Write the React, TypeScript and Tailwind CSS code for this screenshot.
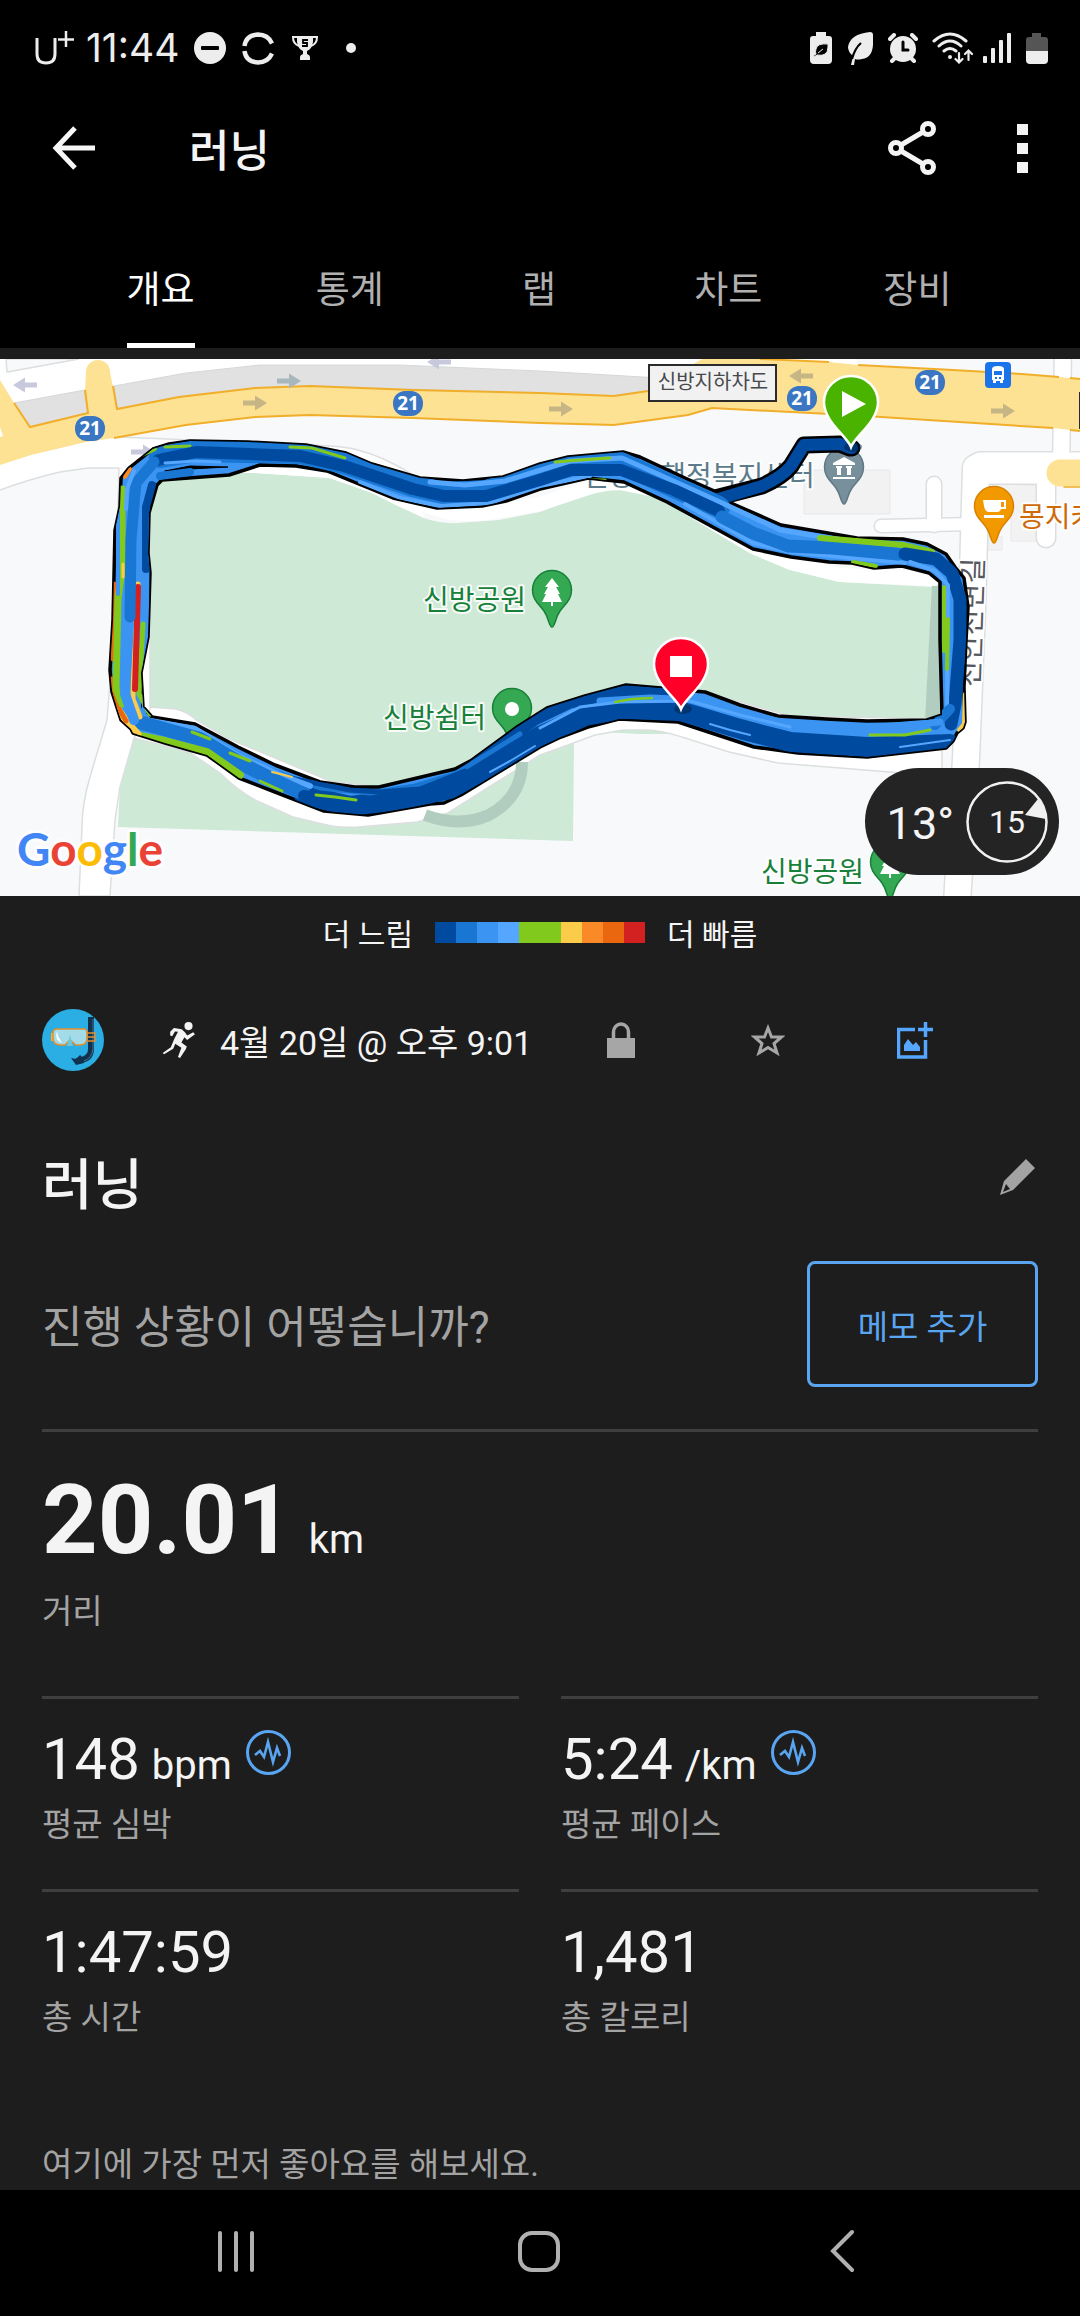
import type { ReactNode } from "react";

const ROUTE_OUTER =
  "M121 119L129 109L153 90L169 85L190 82L248 83L306 86L346 94L372 105L420 119L463 122L503 118L540 105L568 98L623 93L640 98L685 119L719 134L731 144L781 166L857 179L903 180L927 185L946 195L955 208L964 219L968 248L966 281L964 328L965 363L963 369L957 374L953 382L946 389L867 398L798 394L754 388L678 363L619 360L588 368L561 378L540 388L461 436L444 444L430 445L368 456L324 452L275 433L239 419L207 396L165 384L133 374L131 370L121 361L112 333L110 311L113 261L115 171L120 148Z";
const ROUTE_INNER =
  "M162 121L229 116L260 106L296 107L327 112L393 139L437 149L482 147L506 142L540 130L588 119L624 123L667 143L753 190L791 198L829 203L852 204L874 209L902 207L929 214L940 223L940 281L942 356L927 361L867 362L826 360L778 357L740 346L705 333L661 329L626 326L585 337L547 349L517 368L472 401L455 410L379 428L355 428L320 423L275 406L238 388L195 365L152 358L143 348L141 314L148 278L150 214L148 194L149 154L157 126Z";
const ROUTE = ROUTE_OUTER + ROUTE_INNER;

const PACE_COLORS = [
  "#004b9f", "#1976d2", "#3c94f2", "#54a6ff", "#81ca1d",
  "#81ca1d", "#fbcb4a", "#fa8a28", "#ea670f", "#d32020",
];

function Halo({ x, y, size = 28, fill, children }: { x: number; y: number; size?: number; fill: string; children: ReactNode }) {
  return (
    <text x={x} y={y} fontSize={size} fill={fill} stroke="#ffffff" strokeOpacity="0.85" strokeWidth="4" strokeLinejoin="round" paintOrder="stroke">
      {children}
    </text>
  );
}

function Shield({ x, y }: { x: number; y: number }) {
  return (
    <g>
      <rect x={x - 15} y={y - 12} width="30" height="25" rx="12" fill="#3b76c3" />
      <text x={x} y={y + 7} textAnchor="middle" fontSize="19" fontWeight="700" fill="#fff" fontFamily="Noto Sans, sans-serif">21</text>
    </g>
  );
}

function Arrow({ x, y, flip, fill = "#c6b686" }: { x: number; y: number; flip?: boolean; fill?: string }) {
  return (
    <path
      d="M-12 -2.500H0V-7.500L12 0L0 7.500V2.500H-12Z"
      fill={fill}
      transform={`translate(${x} ${y}) rotate(${flip ? 180 : 0})`}
    />
  );
}

function PoiPin({ x, y, fill, edge, children }: { x: number; y: number; fill: string; edge: string; children?: ReactNode }) {
  return (
    <g transform={`translate(${x} ${y})`}>
      <path d="M0 36C-3 36 -3 27 -8 20C-13 13 -19.500 9 -19.500 -1A19.500 19.500 0 0 1 19.500 -1C19.500 9 13 13 8 20C3 27 3 36 0 36Z" fill={fill} stroke={edge} strokeWidth="1.500" />
      {children}
    </g>
  );
}

function Tree() {
  return <path d="M0 -13L7 -4H4L8 3H6L10 11H1V15H-1V11H-10L-6 3H-8L-4 -4H-7Z" fill="#fff" />;
}

function TrackPin({ x, y, fill, children }: { x: number; y: number; fill: string; children: ReactNode }) {
  return (
    <g transform={`translate(${x} ${y})`}>
      <ellipse cx="2" cy="45" rx="9" ry="5" fill="#001a3c" opacity="0.45" />
      <path d="M0 45C-4 34 -27 20 -27 0A27 26 0 0 1 27 0C27 20 4 34 0 45Z" fill={fill} stroke="#fff" strokeWidth="2.500" />
      {children}
    </g>
  );
}

function RouteMap() {
  return (
    <svg viewBox="0 0 1080 537" className="block h-auto w-full" role="img" aria-label="러닝 경로 지도" fontFamily="Noto Sans CJK KR, sans-serif">
      <defs>
        <clipPath id="route-clip">
          <path d={ROUTE} clipRule="evenodd" />
        </clipPath>
      </defs>
      <rect width="1080" height="537" fill="#f8f9fb" />

      {/* parks */}
      <path d="M140 114H255L330 119L372 134L396 146L424 159Q440 165 458 164L499 161L540 153L585 136Q603 131 619 131Q636 130 650 134L712 169L753 194L791 211L840 223L932 228L925 375H640L540 370L400 440H330L230 400L140 365Z" fill="#cee9d6" />
      <path d="M134 379L189 393L220 414Q236 430 255 441L293 458L327 466Q345 469 358 468L417 463L448 454L489 428L540 396L574 384L573 482L540 481L118 468L120 428Z" fill="#cee9d6" />
      <path d="M932 224H942V362H925Z" fill="#b0cdbf" />

      {/* white streets */}
      <path d="M148 348L176 350Q190 354 196 361L227 379L330 422L380 428L455 410L547 349L626 326L705 333L790 357L942 360V414H902L778 404L729 393L685 379Q660 371 647 371H623L595 376L568 386L540 396L489 428L448 454L417 463L358 468Q340 469 327 466L293 458L255 441Q236 430 220 414L189 393L134 379Z" fill="#fff" stroke="#dcdfe0" strokeWidth="1.500" />
      <path d="M119 109L115 261L107 361L90 418Q82 445 82 468L79 537H110L115 461L120 428L134 379L150 350V109Z" fill="#fff" stroke="#dcdfe0" strokeWidth="1.500" />
      <path d="M0 0H829V6H702L640 60L310 50L114 79L119 78L310 86Q345 87 358 91Q376 94 413 116L424 159L396 146L372 134L330 119L255 114H140L119 109H88L60 113Q30 120 0 131Z" fill="#fff" />
      <path d="M0 131Q30 120 60 113L88 109H119M119 78L310 86Q345 87 358 91Q385 98 413 116" fill="none" stroke="#dcdfe0" strokeWidth="1.500" />
      <path d="M330 112L372 125L430 148Q460 160 500 152L540 145L585 130Q603 124 619 124L660 132L753 188L791 204L840 216L938 220" fill="none" stroke="#fff" strokeWidth="14" />
      <path d="M6 0L7 13L79 0Z" fill="#f8f9fb" stroke="#dcdfe0" strokeWidth="1.500" />
      <path d="M425 456Q460 469 489 456Q522 438 522 403" fill="none" stroke="#b0cdbf" strokeWidth="12" />

      {/* buildings */}
      <path d="M804 111H890V155H804ZM993 124L1041 127V147L1036 182H1011V147H993ZM986 178H1002V191H986Z" fill="#f2f2f2" stroke="#e8e8e8" />

      {/* streets on the right */}
      <g fill="none" strokeLinecap="round" strokeLinejoin="round">
        <g stroke="#dcdfe0">
          <path d="M976 109L972 250L966 400L956 560" strokeWidth="29" />
          <path d="M981 109H1100" strokeWidth="34" />
          <path d="M934 125V166" strokeWidth="17" />
          <path d="M881 167L975 165" strokeWidth="15" />
          <path d="M1046 120V179" strokeWidth="21" />
          <path d="M1063 -10L1061 110" strokeWidth="19" />
        </g>
        <g stroke="#fff">
          <path d="M976 109L972 250L966 400L956 560" strokeWidth="26" />
          <path d="M981 109H1100" strokeWidth="31" />
          <path d="M934 125V166" strokeWidth="14" />
          <path d="M881 167L975 165" strokeWidth="12" />
          <path d="M1046 120V179" strokeWidth="18" />
          <path d="M1063 -10L1061 110" strokeWidth="16" />
          <path d="M843 -20V6" strokeWidth="28" />
        </g>
        <path d="M1060 114H1100" stroke="#fde293" strokeWidth="27" />
        <path d="M1064 128H1080" stroke="#f0ae2a" strokeWidth="1.500" />
      </g>

      {/* main road */}
      <path d="M14 44L85 31L88 54L30 68ZM114 27L186 14L260 6H399L540 12L660 19V40L540 34L310 27L255 29L117 50Z" fill="#e1e1e1" stroke="#d4d8da" />
      <path d="M0 21L14 44L30 68L88 54L85 31L86 13A12 12 0 0 1 110 13L113 28L117 50L179 38L255 29L310 27L413 31L540 34L614 37L648 32L702 0H760L829 3L858 6L953 11L1022 15L1059 18L1080 20V72L1053 69L850 56L712 49L688 56L614 66L540 64L413 59L310 56L255 58L186 66L114 79L86 83L31 96L0 106V78L3 77L0 68Z" fill="#fde293" />
      <path d="M14 44L30 68L88 54L85 31M113 27L117 50L179 38L255 29L310 27L413 31L540 34L614 37L648 32M760 0L829 3M858 6L953 11L1022 15L1059 18M1070 19L1080 20M114 79L186 66L255 58L310 56L413 59L540 64L614 66L688 56L712 49L850 56L1053 69M1070 71L1080 72" fill="none" stroke="#f0ae2a" strokeWidth="2" />
      <Arrow x={25} y={26} flip fill="#c8c9dc" />
      <Arrow x={289} y={22} fill="#a9b7bd" />
      <Arrow x={439} y={3} flip fill="#c8c9dc" />
      <Arrow x={255} y={44} />
      <Arrow x={561} y={50} />
      <Arrow x={801} y={17} flip />
      <Arrow x={1003} y={52} />
      <Arrow x={143} y={93} fill="#c8c9dc" />
      <Shield x={90} y={69} />
      <Shield x={408} y={44} />
      <Shield x={802} y={39} />
      <Shield x={930} y={23} />
      <rect x="649" y="6" width="127" height="36" fill="#f1f1f1" stroke="#2b2b2b" strokeWidth="2" />
      <text x="713" y="30" textAnchor="middle" fontSize="20" fill="#47484b">신방지하차도</text>
      <rect x="1079" y="33" width="2" height="37" fill="#2b2b2b" />
      <rect x="985" y="3" width="26" height="26" rx="4" fill="#1a73e8" />
      <path d="M992 10Q992 7 998 7T1004 10V21H1003V24H1000V22H996V24H993V21H992Z" fill="#fff" />
      <path d="M994 12H1002V16H994ZM995 18H997V20H995ZM999 18H1001V20H999Z" fill="#1a73e8" />

      {/* place labels */}
      <Halo x={583} y={127} fill="#5d7b8b">신방동행정복지센터</Halo>
      <Halo x={423} y={251} fill="#188038">신방공원</Halo>
      <Halo x={383} y={369} fill="#188038">신방쉼터</Halo>
      <Halo x={761} y={523} fill="#188038">신방공원</Halo>
      <Halo x={1019} y={168} fill="#cf6a0a">몽지카페</Halo>
      <g transform="translate(979 328) rotate(-88)">
        <Halo x={0} y={0} fill="#55585d">천안천변길</Halo>
      </g>
      <PoiPin x={844} y={109} fill="#78909c" edge="#5f7884">
        <path d="M0 -11L11 -5V-3H-11V-5ZM-8 -2H-2V0H-3V7H-7V0H-8ZM2 -2H8V0H7V7H3V0H2ZM-11 9H11V11H-11Z" fill="#fff" />
      </PoiPin>
      <PoiPin x={552} y={232} fill="#34a853" edge="#188038"><Tree /></PoiPin>
      <PoiPin x={512} y={350} fill="#34a853" edge="#188038"><circle r="7" fill="#fff" /></PoiPin>
      <PoiPin x={890} y={504} fill="#34a853" edge="#188038"><Tree /></PoiPin>
      <PoiPin x={994} y={148} fill="#f29900" edge="#d98200">
        <path d="M-11 -7H7V1Q7 5 3 5H-5Q-9 5 -10 -1ZM-10 8H10V11H-10Z" fill="#fff" />
        <path d="M7 -6H11V1H6" fill="none" stroke="#fff" strokeWidth="2" />
      </PoiPin>

      {/* approach track and loop */}
      <g fill="none" strokeLinecap="round" strokeLinejoin="round">
        <path d="M715 139L762 127Q782 118 791 107L804 86L840 85L850 89H852" stroke="#000" strokeWidth="17" />
        <path d={ROUTE} fill="#3c94f2" fillRule="evenodd" stroke="#000" strokeWidth="3.500" />
        <path d="M715 141L762 127Q782 118 791 107L804 86L840 85L850 89H852" stroke="#004b9f" strokeWidth="12" />
        <g clipPath="url(#route-clip)">
          <path d="M160 98L196 92L300 94L344 104L413 127L444 134L486 132L540 115L571 106L621 104L674 128L719 148" stroke="#1976d2" strokeWidth="22" />
          <path d="M360 123L400 139L440 147L490 144L540 127L590 117" stroke="#54a6ff" strokeWidth="4" />
          <path d="M430 123L465 126L505 122L570 102L622 99L660 116L720 143L780 171L860 184" stroke="#54a6ff" strokeWidth="5" />
          <path d="M165 88L190 87M290 88L312 89L345 99M555 103L580 101L610 99M555 129L590 121L605 121" stroke="#81ca1d" strokeWidth="3" />
          <path d="M158 101L196 93L300 97L344 107L413 130L444 137L486 137L540 121L571 111L621 111L674 131L719 152" stroke="#004b9f" strokeWidth="12" />
          <path d="M165 104L196 102L220 103" stroke="#54a6ff" strokeWidth="3" />
          <path d="M165 112L190 107L228 108L190 110Z" fill="#000" stroke="#000" strokeWidth="1" />
          <path d="M160 117L190 113" stroke="#1976d2" strokeWidth="8" />
          <path d="M685 145L753 184L791 193L850 199L905 204" stroke="#54a6ff" strokeWidth="4" />
          <path d="M722 158L753 174L788 187L833 189L898 195" stroke="#1976d2" strokeWidth="13" />
          <path d="M820 179L857 182L903 186L932 193" stroke="#81ca1d" strokeWidth="6" />
          <path d="M853 203L876 207" stroke="#81ca1d" strokeWidth="4" />
          <path d="M905 195L936 200L952 214L960 240L960 281L955 345L951 365" stroke="#004b9f" strokeWidth="13" />
          <path d="M910 203L935 212L948 226L947 350" stroke="#54a6ff" strokeWidth="4" />
          <path d="M944 228V292M948 260L947 310" stroke="#81ca1d" strokeWidth="4" />
          <path d="M965 335L964 365L959 371" stroke="#fbcb4a" strokeWidth="4" />
          <path d="M935 366L950 350" stroke="#1976d2" strokeWidth="10" />
          <path d="M950 385L867 388L790 383L740 370L680 352L626 350L585 357L540 377L490 408L450 430L400 441L350 447L304 436" stroke="#004b9f" strokeWidth="20" />
          <path d="M475 405L535 361L570 344L626 332L670 335" stroke="#004b9f" strokeWidth="11" />
          <path d="M600 342L650 339L700 341L740 354L790 365L870 369L940 363" stroke="#3c94f2" strokeWidth="7" />
          <path d="M540 369L580 348L620 343L690 342L740 356L790 368" stroke="#54a6ff" strokeWidth="3" />
          <path d="M615 343L632 340L652 339" stroke="#81ca1d" strokeWidth="2.500" />
          <path d="M870 376H905L930 371" stroke="#81ca1d" strokeWidth="3" />
          <path d="M710 365L730 371L750 376M900 388L950 381M535 387L510 402L490 413" stroke="#54a6ff" strokeWidth="2" />
          <path d="M265 409L320 429L370 434L415 427L455 415L520 375" stroke="#1976d2" strokeWidth="5" />
          <path d="M290 419L350 431L380 433L420 430L465 412" stroke="#004b9f" strokeWidth="5" />
          <path d="M140 360L195 370L240 398L280 416L310 427" stroke="#54a6ff" strokeWidth="6" />
          <path d="M135 362L200 380L240 404L280 424L304 435" stroke="#1976d2" strokeWidth="14" />
          <path d="M304 437L350 446L400 441" stroke="#004b9f" strokeWidth="12" />
          <path d="M316 436L335 438L356 441M260 422L282 432M192 373L210 380M230 394L250 402" stroke="#81ca1d" strokeWidth="3" />
          <path d="M272 413L292 418" stroke="#fbcb4a" strokeWidth="2" />
          <path d="M140 377L165 382L207 393L240 416" stroke="#81ca1d" strokeWidth="8" />
          <path d="M118 350L127 363L138 375" stroke="#fbcb4a" strokeWidth="7" />
          <path d="M112 320L118 348L126 362M114 225L113 300" stroke="#ea670f" strokeWidth="5" />
          <path d="M122 130L122 210L118 240L116 330L122 345" stroke="#81ca1d" strokeWidth="7" />
          <path d="M118 150V235" stroke="#3c94f2" strokeWidth="4" />
          <path d="M123 205V218" stroke="#fbcb4a" strokeWidth="3" />
          <path d="M145 130L146 350" stroke="#3c94f2" strokeWidth="8" />
          <path d="M152 126L146 148L146 210" stroke="#004b9f" strokeWidth="8" />
          <path d="M143 265L139 335L150 355" stroke="#81ca1d" strokeWidth="5" />
          <path d="M138 225L133 320L133 340L140 358" stroke="#fbcb4a" strokeWidth="5" />
          <path d="M138 228L135 330" stroke="#d32020" strokeWidth="6" />
          <path d="M129 265L125 335L134 361" stroke="#3c94f2" strokeWidth="10" />
          <path d="M154 103L136 124L131 180L130 258" stroke="#1976d2" strokeWidth="11" />
          <path d="M134 112L127 130L126 150" stroke="#54a6ff" strokeWidth="4" />
          <path d="M142 96L155 90" stroke="#81ca1d" strokeWidth="4" />
          <path d="M125 118L130 110" stroke="#fa8a28" strokeWidth="4" />
        </g>
      </g>

      <TrackPin x={851} y={43} fill="#49b300"><path d="M-9 -11L15 2L-9 15Z" fill="#fff" /></TrackPin>
      <TrackPin x={681} y={305} fill="#ff0029"><rect x="-11" y="-8" width="22" height="21" fill="#fff" /></TrackPin>

      <text x="17" y="507" fontFamily="Lato, sans-serif" fontSize="46" fontWeight="700" stroke="#fff" strokeOpacity="0.75" strokeWidth="6" strokeLinejoin="round" paintOrder="stroke">
        <tspan fill="#4285f4">G</tspan><tspan fill="#ea4335">o</tspan><tspan fill="#fbbc05">o</tspan><tspan fill="#4285f4">g</tspan><tspan fill="#34a853">l</tspan><tspan fill="#ea4335">e</tspan>
      </text>
    </svg>
  );
}

function StatusBar() {
  return (
    <div className="flex h-24 items-center justify-between pr-8 pl-[34px] text-[#ededed]">
      <div className="flex items-center">
        <svg width="40" height="34" viewBox="0 0 40 34" fill="none" stroke="currentColor" aria-label="U+">
          <path d="M3 7V23Q3 32 12 32T21 23V7" strokeWidth="3" />
          <path d="M24 8.500H40M32 0V16" strokeWidth="2.500" />
        </svg>
        <span className="ml-3 font-[Inter,sans-serif] text-[39px] leading-[48px]">11:44</span>
        <svg className="ml-[15px]" width="32" height="32" viewBox="0 0 32 32" aria-hidden="true">
          <circle cx="16" cy="16" r="16" fill="currentColor" />
          <rect x="7" y="14" width="18" height="4" rx="1" fill="#000" />
        </svg>
        <svg className="ml-4" width="32" height="33" viewBox="0 0 32 33" fill="none" stroke="currentColor" strokeWidth="4.500" aria-hidden="true">
          <path d="M2.500 14Q4 3 16 2.500Q26 2.500 30 11.500M2.500 19Q4 30 16 30.500Q26 30.500 30 21.500" />
        </svg>
        <svg className="ml-[18px]" width="26" height="24" viewBox="0 0 26 24" fill="currentColor" aria-hidden="true">
          <path d="M5 0H21V6Q20 13 15 15V18Q18 19 18 21V24H8V21Q8 19 11 18V15Q6 13 5 6Z" />
          <path d="M5 1H1Q1 8 7 10M21 1H25Q25 8 19 10" fill="none" stroke="currentColor" strokeWidth="2" />
          <path d="M16 4H11V7H15V10H10" fill="none" stroke="#000" strokeWidth="1.800" />
        </svg>
        <span className="ml-7 size-[10px] rounded-full bg-current" />
      </div>
      <div className="flex items-center" aria-hidden="true">
        <svg width="22" height="32" viewBox="0 0 22 32">
          <path d="M6 0H16V4H19Q22 4 22 7V28Q22 32 18 32H4Q0 32 0 28V7Q0 4 3 4H6Z" fill="currentColor" />
          <path d="M18 12Q7 11 6 17Q5 20 6 22L3 24L4 25L7 23Q18 25 18 15ZM8 21L13 17" fill="#000" stroke="#ededed" strokeWidth="1" />
        </svg>
        <svg className="ml-4" width="25" height="33" viewBox="0 0 25 33">
          <path d="M22 0Q25 0 25 3V13Q24 26 14 27Q9 28 7 27L6 33H3L5 24Q0 20 0 15Q2 2 22 0Z" fill="currentColor" />
          <path d="M13 11Q7 16 4 27" fill="none" stroke="#000" strokeWidth="2.200" />
        </svg>
        <svg className="ml-[15px]" width="30" height="30" viewBox="0 0 30 30" stroke="currentColor" fill="none" strokeLinecap="round">
          <circle cx="15" cy="16" r="13" fill="currentColor" stroke="none" />
          <path d="M2 6L6 2M28 6L24 2" strokeWidth="4" />
          <path d="M4 28L7 25M26 28L23 25" strokeWidth="4" />
          <path d="M15 9V17H20" stroke="#000" strokeWidth="3" />
        </svg>
        <svg className="ml-[14px]" width="42" height="32" viewBox="0 0 42 32" fill="none" stroke="currentColor" strokeLinecap="round" strokeWidth="3">
          <path d="M2 9Q18 -5 34 9M7 14Q18 4 29 14M12 19Q18 14 24 19" />
          <circle cx="18" cy="25" r="2" fill="currentColor" stroke="none" />
          <path d="M27 21V30M23.500 27L27 30.500L30.500 27M36.500 28V19M33 22L36.500 18.500L40 22" strokeWidth="2.200" />
        </svg>
        <svg className="ml-[9px]" width="28" height="30" viewBox="0 0 28 30" fill="currentColor">
          <rect y="23" width="4" height="7" rx="1" /><rect x="8" y="15" width="4" height="15" rx="1" /><rect x="16" y="7" width="4" height="23" rx="1" /><rect x="24" width="4" height="30" rx="1" />
        </svg>
        <svg className="ml-[15px]" width="22" height="31" viewBox="0 0 22 31">
          <path d="M6 0H15V4H19Q22 4 22 7V18H0V7Q0 4 3 4H6Z" fill="#555" />
          <path d="M0 18H22V27Q22 31 18 31H4Q0 31 0 27Z" fill="currentColor" />
        </svg>
      </div>
    </div>
  );
}

function Avatar() {
  return (
    <svg width="62" height="62" viewBox="0 0 62 62" role="img" aria-label="프로필">
      <circle cx="31" cy="31" r="31" fill="#2aaee4" />
      <path d="M49 8V40Q49 51 34 52" fill="none" stroke="#10324f" strokeWidth="6" />
      <path d="M51 10V40Q50 49 42 52" fill="none" stroke="#4b7391" strokeWidth="1" />
      <path d="M29 49L34 50L38 46L42 50V54L34 56Z" fill="#10324f" />
      <path d="M45 24H53V32H45M46 28H53" fill="none" stroke="#e58f2b" strokeWidth="1.300" />
      <path d="M9 24H13V32H9Z" fill="#f9b233" />
      <path d="M15 20H42Q45 20 45 24V29Q45 36 38 36H34L28 31L23 36H19Q11 36 11 29V24Q11 20 15 20Z" fill="#a3dce8" stroke="#e58f2b" strokeWidth="1.600" />
      <path d="M15 22Q12 31 20 34L16 27Z" fill="#fff" />
      <path d="M28 26L31 37H25Z" fill="#6cc6df" />
    </svg>
  );
}

function Runner() {
  return (
    <svg width="34" height="36" viewBox="0 0 96 106" fill="#f4f4f4" aria-hidden="true">
      <circle cx="76" cy="12" r="12" />
      <path d="M22 29L33 18L56 21L66 31L72 40L90 30L95 36L72 53L64 45L55 60L71 72L68 80L51 106L45 103L55 76L37 64L31 79L4 95L0 91L24 74L34 50L45 29L36 28L28 42L22 40Z" />
    </svg>
  );
}

function Pulse() {
  return (
    <svg width="45" height="45" viewBox="0 0 45 45" fill="none" stroke="#5aa5f2" aria-hidden="true">
      <circle cx="22.500" cy="22.500" r="21" strokeWidth="3" />
      <path d="M9 25L14 21L18 27L22 12L27 32L31 18L34 26" strokeWidth="2.600" />
    </svg>
  );
}

function Stat({ value, unit, label, pulse }: { value: string; unit?: string; label: string; pulse?: boolean }) {
  return (
    <div className="border-t-[3px] border-[#3f3f3f] pt-6 pb-11">
      <dd className="flex items-baseline text-[58px] leading-[72px] text-[#f4f4f4]">
        {value}
        {unit && <span className="ml-3 text-[40px] leading-none">{unit}</span>}
        {pulse && (
          <button type="button" aria-label={`${label} 그래프`} className="ml-[14px] mt-[7px] self-start">
            <Pulse />
          </button>
        )}
      </dd>
      <dt className="mt-[10px] text-[33px] leading-10 text-[#a3a3a3]">{label}</dt>
    </div>
  );
}

export default function App() {
  const tabs = ["개요", "통계", "랩", "차트", "장비"];
  return (
    <div className="min-h-screen bg-[#1d1d1d] font-[Roboto,'Noto_Sans_CJK_KR',sans-serif] text-[#f4f4f4]">
      <header className="bg-black">
        <StatusBar />
        <div className="flex h-[104px] items-center pr-[52px] pl-[52px]">
          <button type="button" aria-label="뒤로">
            <svg width="44" height="44" viewBox="0 0 44 44" fill="none" stroke="#f7f7f7" strokeWidth="5">
              <path d="M23 2L4 22L23 42M4 22H43" />
            </svg>
          </button>
          <h1 className="ml-[93px] flex-1 pt-2 text-[44px] leading-[60px] font-medium">러닝</h1>
          <button type="button" aria-label="공유">
            <svg width="48" height="54" viewBox="0 0 48 54" fill="none" stroke="#f4f4f4" strokeWidth="5">
              <circle cx="8" cy="27" r="5.500" /><circle cx="40" cy="8" r="5.500" /><circle cx="40" cy="46" r="5.500" />
              <path d="M13 24L35 11M13 30L35 43" />
            </svg>
          </button>
          <button type="button" aria-label="더보기" className="ml-[81px] flex flex-col gap-2">
            <span className="size-[11px] bg-[#f4f4f4]" />
            <span className="size-[11px] bg-[#f4f4f4]" />
            <span className="size-[11px] bg-[#f4f4f4]" />
          </button>
        </div>
        <nav role="tablist" className="grid grid-cols-5 pr-[68px] pl-[66px] pt-[67px]">
          {tabs.map((tab, i) => (
            <button
              key={tab}
              type="button"
              role="tab"
              aria-selected={i === 0}
              className={
                i === 0
                  ? "mx-auto border-b-[5px] border-white pb-7 text-[37px] leading-[48px] text-white"
                  : "mx-auto border-b-[5px] border-transparent pb-7 text-[37px] leading-[48px] text-[#b0b0b0]"
              }
            >
              {tab}
            </button>
          ))}
        </nav>
      </header>

      <main>
        <section className="relative mt-[11px]">
          <RouteMap />
          <div className="absolute right-[21px] bottom-[21px] flex h-[107px] items-center gap-3 rounded-full bg-[#242424] pr-[11px] pl-[22px]">
            <span className="pt-1 text-[45px] leading-[56px]">13°</span>
            <span className="relative grid size-[82px] place-items-center text-[32px]">
              <svg className="absolute inset-0" width="82" height="82" viewBox="0 0 82 82" aria-hidden="true">
                <circle cx="41" cy="41" r="39.500" fill="none" stroke="#f1f1f1" strokeWidth="2.500" />
                <path d="M59 34L72 18Q79 26 80 38Z" fill="#f1f1f1" />
              </svg>
              15
            </span>
          </div>
        </section>

        <div className="flex h-[76px] items-center justify-center gap-[22px] text-[30px] leading-10">
          <span className="pt-[2px]">더 느림</span>
          <span className="mb-1 flex" aria-hidden="true">
            {PACE_COLORS.map((color, i) => (
              <span key={i} className="h-[21px] w-[21px]" style={{ backgroundColor: color }} />
            ))}
          </span>
          <span className="pt-[2px]">더 빠름</span>
        </div>

        <div className="px-[42px]">
          <div className="mr-[50px] flex h-[136px] items-center">
            <Avatar />
            <span className="ml-[58px]"><Runner /></span>
            <p className="ml-6 flex-1 pt-[6px] text-[34px] leading-10 whitespace-nowrap">4월 20일 @ 오후 9:01</p>
            <button type="button" aria-label="비공개" className="flex w-[147px] justify-center">
              <svg width="28" height="36" viewBox="0 0 28 36">
                <path d="M6.500 17V10A7.500 8 0 0 1 21.500 10V17" fill="none" stroke="#a6a6a6" strokeWidth="3.500" />
                <rect y="16" width="28" height="20" fill="#a6a6a6" />
              </svg>
            </button>
            <button type="button" aria-label="즐겨찾기" className="flex w-[147px] justify-center">
              <svg width="34" height="33" viewBox="0 0 34 33" fill="none" stroke="#a6a6a6" strokeWidth="3">
                <path d="M17 4L20.500 13H30.500L23 19.500L26 29L17 23.500L8 29L11 19.500L3.500 13H13.500Z" />
              </svg>
            </button>
            <button type="button" aria-label="사진 추가" className="flex w-[147px] justify-center">
              <svg width="36" height="37" viewBox="0 0 36 37">
                <path d="M18 7.500H1.500V35H28.500V18" fill="none" stroke="#54a6ff" strokeWidth="3.500" />
                <path d="M28.500 0V15M21 7.500H36" fill="none" stroke="#54a6ff" strokeWidth="3.500" />
                <path d="M7 29V23L11 17L16 23L19 20L23 25V29Z" fill="#54a6ff" />
              </svg>
            </button>
          </div>

          <div className="flex h-[153px] items-center justify-between">
            <h2 className="text-[55px] leading-[72px] font-medium">러닝</h2>
            <button type="button" aria-label="이름 편집" className="mr-[3px] mb-4">
              <svg width="35" height="36" viewBox="0 0 35 36">
                <path d="M26 0L35 9L13 31L0 36L4 22ZM6 25L3 33L10 30Z" fill="#a3a3a3" fillRule="evenodd" />
              </svg>
            </button>
          </div>

          <div className="flex items-center justify-between">
            <p className="pt-2 text-[44px] leading-[60px] text-[#a3a3a3]">진행 상황이 어떻습니까?</p>
            <button type="button" className="h-[126px] w-[231px] rounded-lg border-[3px] border-[#5aa5f2] pt-2 text-[33px] leading-10 text-[#5aa5f2]">
              메모 추가
            </button>
          </div>

          <dl>
            <div className="mt-[42px] border-t-[3px] border-[#3f3f3f] pt-7 pb-[64px]">
              <dd className="flex items-baseline text-[97px] leading-[120px] font-bold">
                20.01
                <span className="ml-4 text-[40px] leading-none font-normal">km</span>
              </dd>
              <dt className="mt-3 text-[33px] leading-10 text-[#a3a3a3]">거리</dt>
            </div>
            <div className="grid grid-cols-2 gap-x-[42px]">
              <Stat value="148" unit="bpm" label="평균 심박" pulse />
              <Stat value="5:24" unit="/km" label="평균 페이스" pulse />
              <Stat value="1:47:59" label="총 시간" />
              <Stat value="1,481" label="총 칼로리" />
            </div>
          </dl>

          <p className="pt-[63px] pb-[5px] text-[33px] leading-10 text-[#a3a3a3]">여기에 가장 먼저 좋아요를 해보세요.</p>
        </div>
      </main>

      <footer className="flex h-[126px] items-center justify-between bg-black pr-[87px] pb-1 pl-[85px]">
        <button type="button" aria-label="최근 앱" className="flex w-[302px] justify-center gap-3">
          <span className="h-[41px] w-[4px] rounded-full bg-[#b0b0b0]" />
          <span className="h-[41px] w-[4px] rounded-full bg-[#b0b0b0]" />
          <span className="h-[41px] w-[4px] rounded-full bg-[#b0b0b0]" />
        </button>
        <button type="button" aria-label="홈" className="flex w-[302px] justify-center">
          <span className="h-[41px] w-[42px] rounded-[14px] border-4 border-[#b0b0b0]" />
        </button>
        <button type="button" aria-label="뒤로 가기" className="flex w-[302px] justify-center">
          <svg width="24" height="44" viewBox="0 0 24 44" fill="none" stroke="#b0b0b0" strokeWidth="4" strokeLinecap="round">
            <path d="M22 3L3 22L22 41" />
          </svg>
        </button>
      </footer>
    </div>
  );
}
